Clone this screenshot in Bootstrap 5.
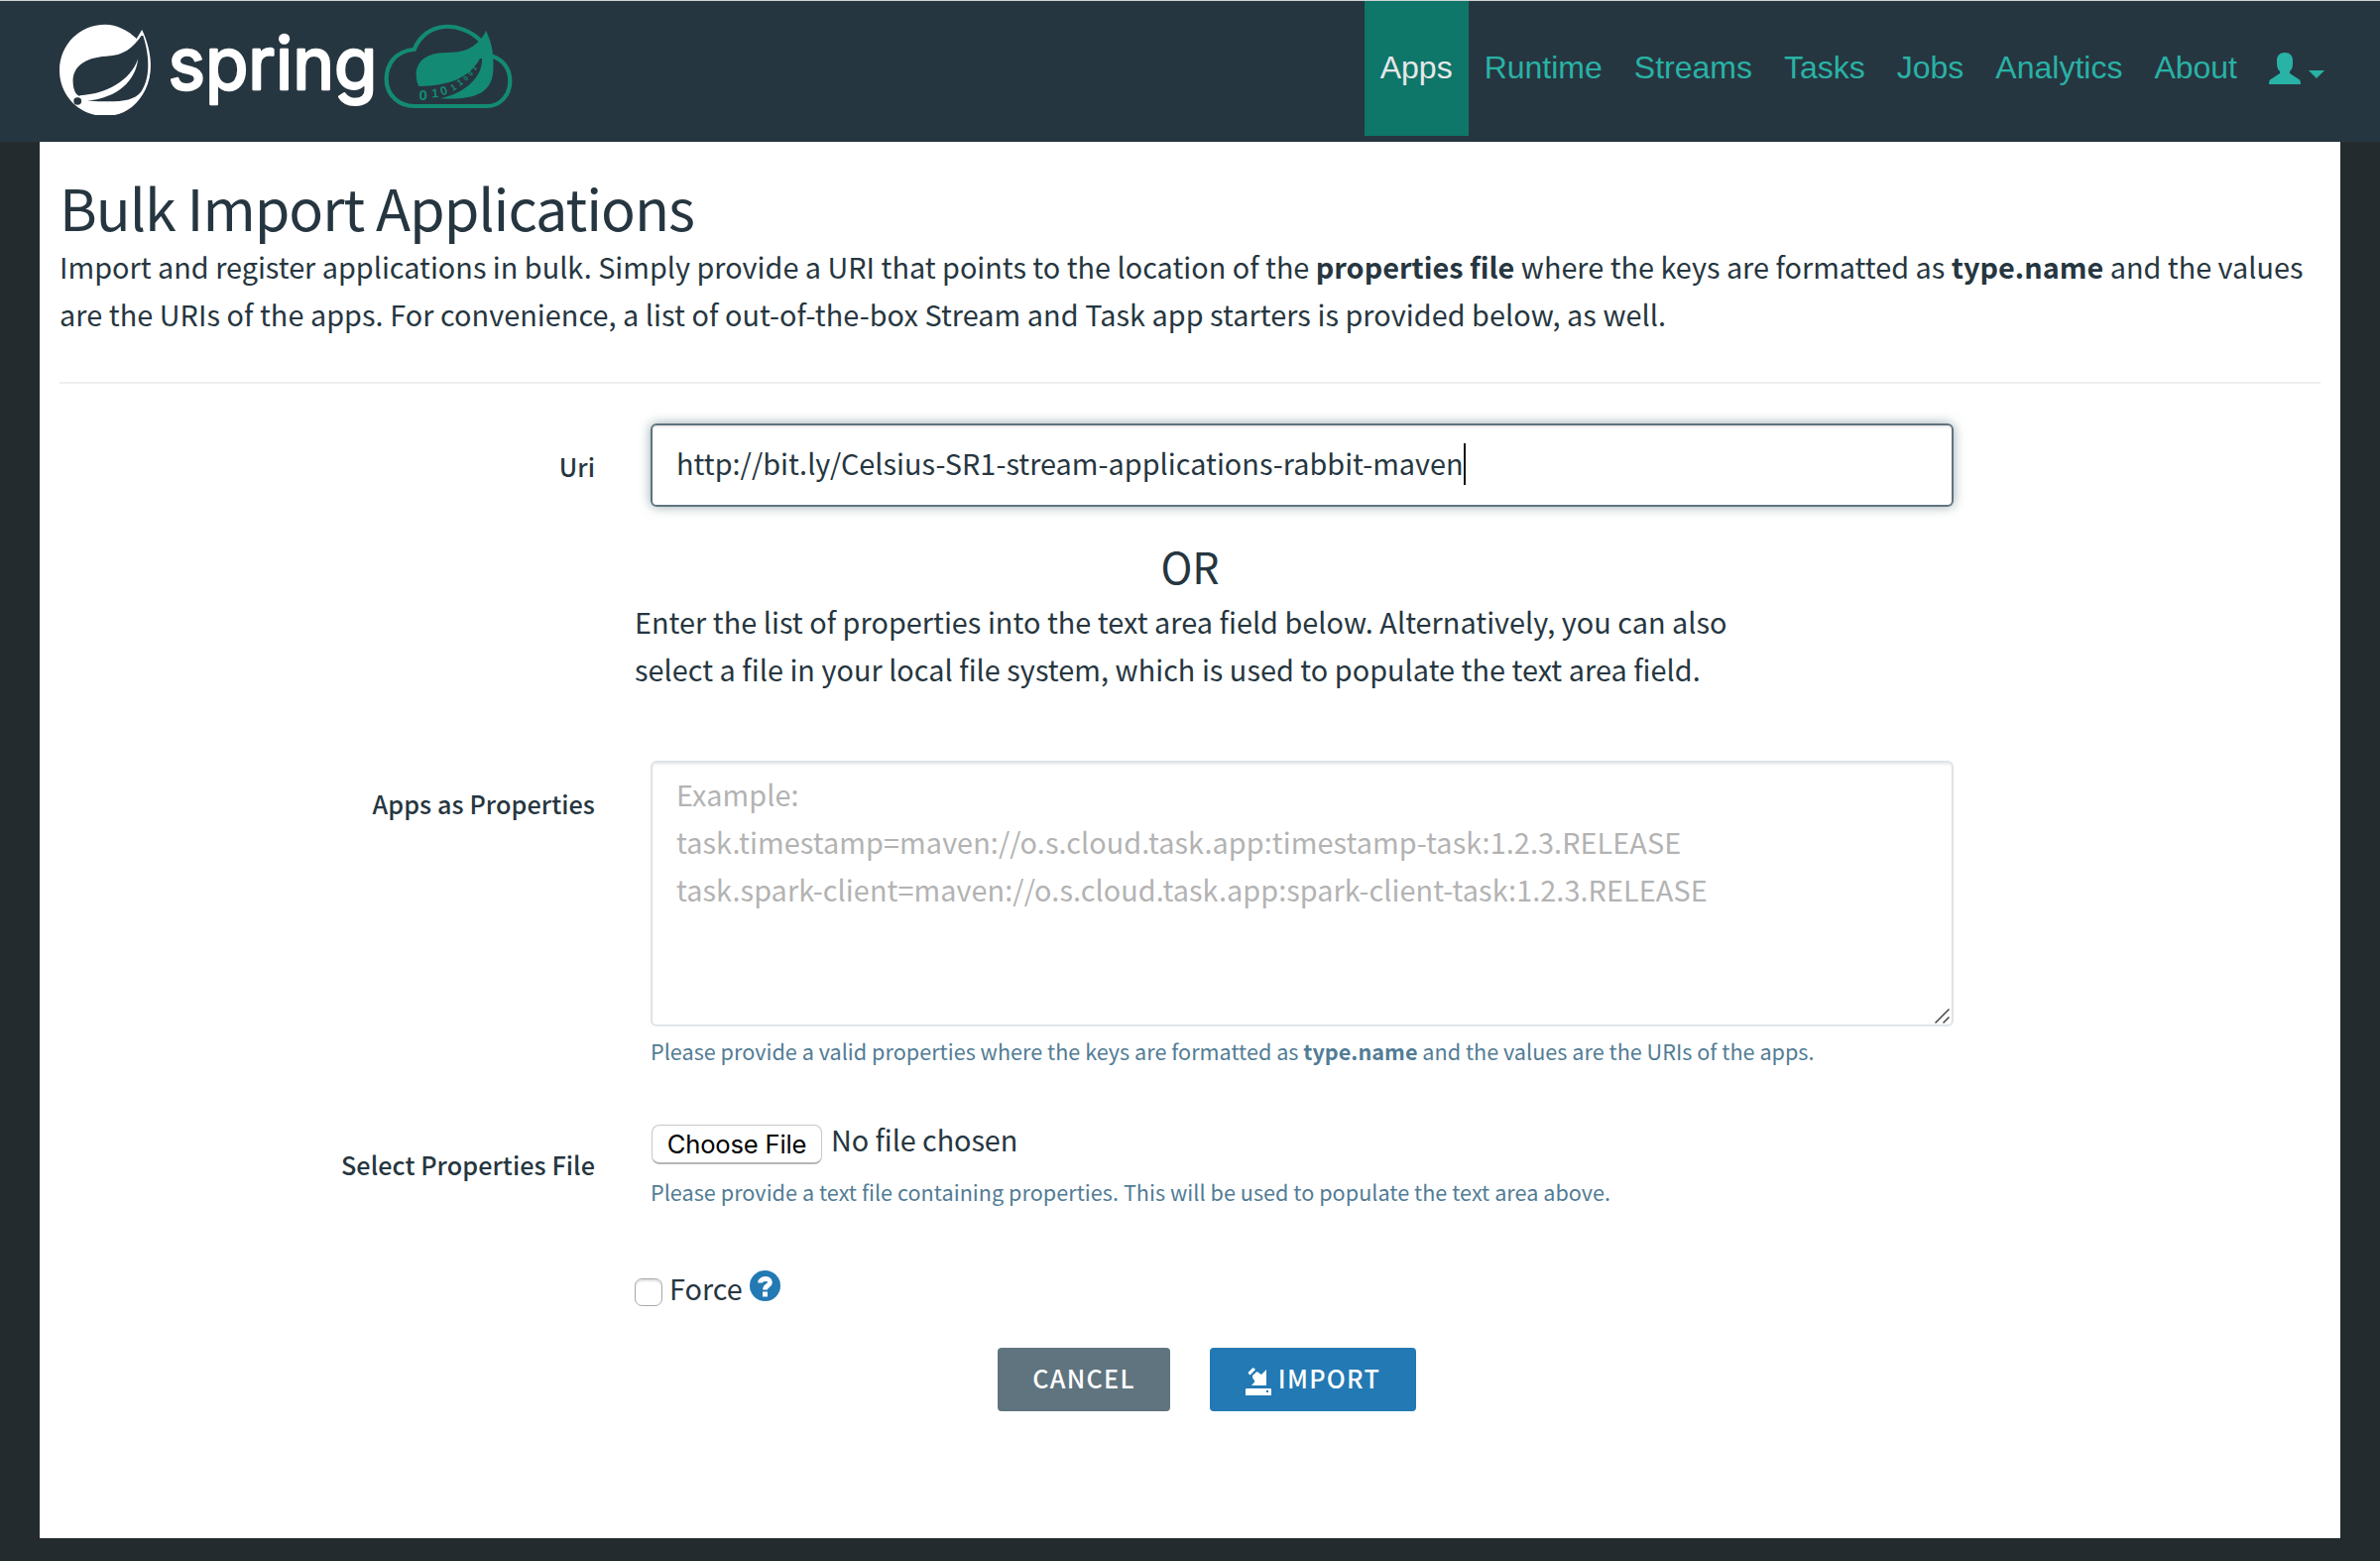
<!DOCTYPE html>
<html lang="en">
<head>
<meta charset="utf-8">
<title>Bulk Import Applications</title>
<link href="https://cdn.jsdelivr.net/npm/bootstrap@5.3.0/dist/css/bootstrap.min.css" rel="stylesheet">
<style>
body{background:#242b2e;color:#263640;font:400 28.8px/48px "Noto Sans CJK SC","Source Sans Pro",sans-serif;}
.topbar{height:143px;background:#263640;border-top:1px solid #cdd3d3;padding:0 40px 0 60px;}
.topbar .nav-link{font:32px/48px "Liberation Sans",Arial,sans-serif;color:#29b2a6;height:136px;padding:43px 16px 0;}
.topbar .nav-link.active{background:#0f766a;color:#e6e8e8;}
.topbar .user-link{padding-top:52px;gap:8px;align-items:flex-start;}
.user-link .arrow{margin-top:18px;}
.brand-logo{margin-top:15px;}
.page{margin:0 40px;height:1408px;}
.page-head{padding:0 20px;}
.page-head h1{font-size:57.6px;line-height:64px;font-weight:400;letter-spacing:-1.05px;padding-top:33px;margin:0;height:102px;}
.page-head p{margin:0;height:140px;letter-spacing:.015px;}
.page-head p span{letter-spacing:.065px;}
.page-head hr{margin:0;border-top:2px solid #eee;opacity:1;}
.lbl{font-size:25.2px;font-weight:500;line-height:40px;letter-spacing:.07px;text-align:right;padding-right:20px;}
.lbl-uri{padding-top:23px;}
.lbl-props{padding-top:27px;}
.lbl-file{padding-top:24px;}
.ctl{padding-left:36px;}
.uri-row{padding-top:40px;}
.intro-col{padding:5px 0 0 20px;height:165px;letter-spacing:.045px;}
.props-row{height:367px;}
.props-row .ctl{padding-top:4px;}
.props-box{width:1314px;}
.file-row{height:151px;}
.force-row{height:78px;}
.force-col{padding-left:20px;}
.field{width:1314px;font-size:28.8px;line-height:48px;color:#263640;border:2px solid #dfe4e7;border-radius:6px;padding:8px 24px;box-shadow:inset 0 2px 2px rgba(0,0,0,.075);}
.field-active{height:84px;padding-top:14px;border-color:#5f747f;letter-spacing:.035px;box-shadow:inset 0 2px 2px rgba(0,0,0,.075),0 0 12px rgba(70,100,110,.55);}
.field-active i{width:2px;height:42px;background:#111;margin-top:4px;}
textarea.field{height:268px;resize:none;display:block;letter-spacing:.085px;}
textarea.field::placeholder{color:#b3b3b3;opacity:1;}
.grip{position:absolute;right:4px;bottom:3px;}
.hint{font-size:21.6px;line-height:32px;color:#527c95;letter-spacing:.02px;padding-top:9px;}
.hint-file{padding-top:12px;letter-spacing:.035px;}
.or{font-size:43px;line-height:56px;text-align:center;padding-top:31px;}
.file-pick{padding-top:4px;gap:9px;}
.file-pick span{margin-top:-9px;letter-spacing:-.07px;}
.file-btn{width:172px;height:40px;border:1px solid #c8c8c8;border-bottom:2px solid #b5b5b5;border-radius:8px;background:#fff;color:#000;font:25.6px/38px Inter,sans-serif;letter-spacing:-.2px;text-align:center;padding:0;margin-left:1px;}
.tick{width:28px;height:28px;border:1px solid #a9a9a9;border-radius:6px;margin:8px 0 0;box-shadow:inset 0 2px 2px rgba(0,0,0,.12);}
.force-text{margin:-6px 7px 0 7px;}
.actions{padding-left:966px;gap:40px;}
.act{height:64px;border:0;border-radius:4px;font-size:25.2px;font-weight:500;line-height:60px;letter-spacing:1.3px;padding:0;color:#fff;}
.act-cancel{width:174px;background:#5f747f;}
.act-import{width:208px;background:#2379b3;}
.act-import svg{margin:20px 7px 0 0;}
.act-cancel,.act-import{align-items:flex-start;}
</style>
</head>
<body>
<header class="topbar d-flex justify-content-between align-items-start">
  <a class="brand-logo" href="#">
    <svg width="458" height="100" viewBox="60 16 458 100" class="d-block">
      <g transform="scale(.35714 .33333)">
        <path d="M401 90C392 106 388 112 386 117C360 90 330 75 297 74C225 74 168 135 168 213C168 290 225 351 297 351C345 351 385 325 410 272C437 215 425 145 401 90Z" fill="#fff"/>
        <path d="M399 108C375 145 350 168 300 170C235 174 206 205 206 245C206 272 215 288 226 291L250 305C330 310 375 308 398 278C428 232 420 160 404 108Z" fill="#263640"/>
        <path d="M390 178C368 245 300 284 226 289L218 300L245 306C335 295 382 245 390 178Z" fill="#fff"/>
        <circle cx="219" cy="306" r="11" fill="#263640"/>
        <path d="M1359 125C1300 60 1200 65 1170 149C1115 154 1091 197 1091 240C1091 290 1130 321 1168 321H1375C1410 321 1440 290 1440 245C1440 205 1418 180 1390 170" fill="none" stroke="#138a74" stroke-width="12"/>
        <path d="M1372 92C1362 118 1353 122 1348 128C1315 162 1285 156 1248 160C1200 163 1175 190 1175 225C1175 245 1180 254 1183 261C1265 259 1325 238 1355 177L1361 177C1363 230 1318 280 1243 298C1340 302 1394 285 1393 200C1393 145 1385 122 1372 92Z" fill="#138a74"/>
      </g>
      <g fill="#138a74" font-family="Liberation Sans" font-weight="700">
        <text font-size="15" x="422.500" y="101">0</text>
        <text font-size="12.500" x="435.500 445.500" y="98.500 96.500" rotate="-4 -18">10</text>
        <text font-size="9" x="456.500 463.500" y="92 87" rotate="-30 -36">11</text>
        <text font-size="7" x="470 475 479" y="82 77 71.500" rotate="-45 -50 -55">001</text>
      </g>
      <text x="169.500" y="90" textLength="211" lengthAdjust="spacingAndGlyphs" font-family="Inter" font-weight="400" font-size="73" fill="#fff" stroke="#fff" stroke-width="2.600" stroke-linejoin="round">spring</text>
    </svg>
  </a>
  <nav class="nav flex-nowrap">
    <a class="nav-link active" href="#">Apps</a>
    <a class="nav-link" href="#">Runtime</a>
    <a class="nav-link" href="#">Streams</a>
    <a class="nav-link" href="#">Tasks</a>
    <a class="nav-link" href="#">Jobs</a>
    <a class="nav-link" href="#">Analytics</a>
    <a class="nav-link" href="#">About</a>
    <a class="nav-link user-link d-flex" href="#" aria-label="User">
      <svg width="32" height="32" viewBox="0 0 32 32" fill="currentColor"><path d="M16 0C11 0 8 3 8 8V11C8 15 9 17 11 19V21L1 27.500Q0 28.500 0 32H32Q32 28.500 31 27.500L21 21V19C23 17 24 15 24 11V8C24 3 21 0 16 0Z"/></svg>
      <svg class="arrow" width="16" height="8" viewBox="0 0 16 8" fill="currentColor"><path d="M0 0H16L8 8Z"/></svg>
    </a>
  </nav>
</header>
<main class="page bg-white">
  <div class="page-head">
    <h1>Bulk Import Applications</h1>
    <p>Import and register applications in bulk. Simply provide a URI that points to the location of the <b>properties file</b> where the keys are formatted as <b>type.name</b> and the values<br><span>are the URIs of the apps. For convenience, a list of out-of-the-box Stream and Task app starters is provided below, as well.</span></p>
    <hr>
  </div>
  <form>
    <div class="row g-0 uri-row">
      <label class="col-3 lbl lbl-uri">Uri</label>
      <div class="col ctl"><div class="field field-active d-flex"><span>http://bit.ly/Celsius-SR1-stream-applications-rabbit-maven</span><i></i></div></div>
    </div>
    <div class="or">OR</div>
    <div class="row g-0"><div class="col-6 offset-3 intro-col">Enter the list of properties into the text area field below. Alternatively, you can also<br>select a file in your local file system, which is used to populate the text area field.</div></div>
    <div class="row g-0 props-row">
      <label class="col-3 lbl lbl-props" for="props">Apps as Properties</label>
      <div class="col ctl">
        <div class="position-relative props-box">
          <textarea id="props" class="field" placeholder="Example:
task.timestamp=maven://o.s.cloud.task.app:timestamp-task:1.2.3.RELEASE
task.spark-client=maven://o.s.cloud.task.app:spark-client-task:1.2.3.RELEASE"></textarea>
          <svg class="grip" width="15" height="15" viewBox="0 0 15 15" stroke="#444" stroke-width="1.500"><path d="M.5 14.500L14.500.5M8.500 14.500L14.500 8.500"/></svg>
        </div>
        <div class="hint">Please provide a valid properties where the keys are formatted as <b>type.name</b> and the values are the URIs of the apps.</div>
      </div>
    </div>
    <div class="row g-0 file-row">
      <label class="col-3 lbl lbl-file">Select Properties File</label>
      <div class="col ctl">
        <div class="d-flex file-pick"><button type="button" class="file-btn">Choose File</button><span>No file chosen</span></div>
        <div class="hint hint-file">Please provide a text file containing properties. This will be used to populate the text area above.</div>
      </div>
    </div>
    <div class="row g-0 force-row"><div class="col offset-3 d-flex align-items-start force-col">
      <input type="checkbox" class="form-check-input tick"><span class="force-text">Force</span>
      <svg width="31" height="31" viewBox="0 0 31 31"><circle cx="15.500" cy="15.500" r="15.500" fill="#2379b3"/><path d="M10.500 12.500C10.500 7.500 20.500 7 20.500 12C20.500 15.500 15.500 15 15.500 19.500" fill="none" stroke="#fff" stroke-width="4.800"/><path d="M13 21.500h5v5h-5z" fill="#fff"/></svg>
    </div></div>
    <div class="d-flex actions">
      <button type="button" class="btn act act-cancel d-flex justify-content-center">CANCEL</button>
      <button type="button" class="btn act act-import d-flex justify-content-center"><svg width="26" height="28" viewBox="0 0 26 28" fill="#fff"><path d="M3 4.500L7 .5Q8 0 9 1L10 2L4.500 7.500L3 6Q2.500 5.200 3 4.500ZM7 8L11.500 4L16 7L21 2V18H6L9.500 14L7 10Z"/><path fill-rule="evenodd" d="M1 21H25Q26 21 26 22V28H0V22Q0 21 1 21ZM21 23V25H23V23Z"/></svg>IMPORT</button>
    </div>
  </form>
</main>
<script src="https://cdn.jsdelivr.net/npm/bootstrap@5.3.0/dist/js/bootstrap.bundle.min.js"></script>
</body>
</html>
